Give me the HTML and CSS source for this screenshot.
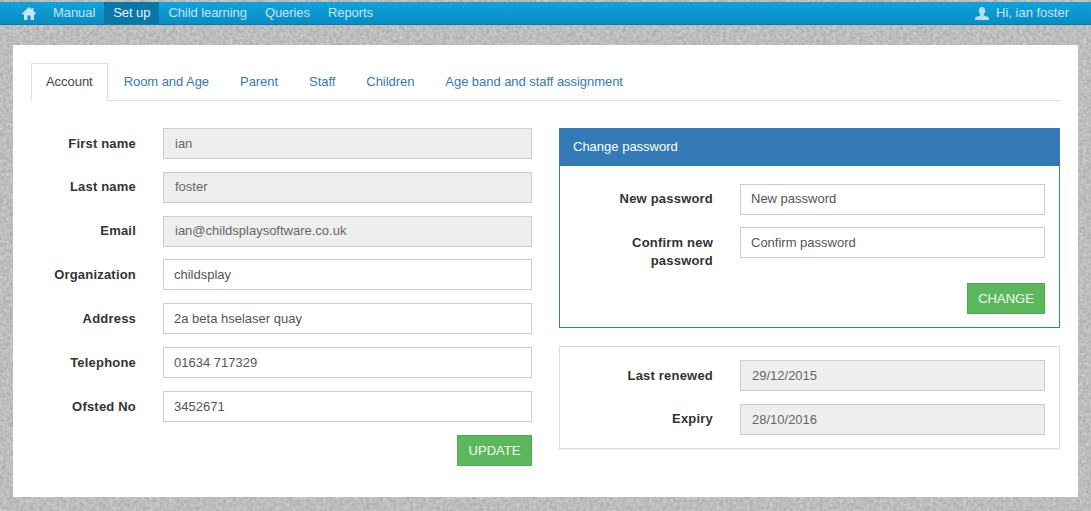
FILE: index.html
```html
<!DOCTYPE html>
<html lang="en">
<head>
<meta charset="utf-8">
<title>Account</title>
<link rel="stylesheet" href="styles.css">
</head>
<body>
<svg class="noise" aria-hidden="true"><filter id="grain" x="0" y="0" width="100%" height="100%" color-interpolation-filters="sRGB"><feTurbulence type="fractalNoise" baseFrequency="0.3" numOctaves="3" seed="4"/><feColorMatrix values="0 0 0 0.2 0.64  0 0 0 0.2 0.64  0 0 0 0.2 0.64  0 0 0 0 1"/></filter><rect width="100%" height="100%" filter="url(#grain)"/></svg>
<nav class="navbar">
  <a class="nav-home" href="#"><svg width="14" height="13" viewBox="0 0 14 13"><path fill="#c4e6f5" d="M7 0 L9.6 2.4 V1 H11.4 V4.1 L14 6.6 L13.2 7.4 H12 V13 H8.5 V8.6 H5.5 V13 H2 V7.4 H.8 L0 6.6 Z"/></svg></a>
  <a class="nav-link" href="#">Manual</a>
  <a class="nav-link active" href="#">Set up</a>
  <a class="nav-link" href="#">Child learning</a>
  <a class="nav-link" href="#">Queries</a>
  <a class="nav-link" href="#">Reports</a>
  <a class="nav-user" href="#"><svg width="14" height="13" viewBox="0 0 14 13"><path fill="#b4e0f3" d="M7 0 C9 0 10.2 1.5 10.2 3.6 C10.2 5.2 9.5 6.6 8.8 7.3 V8.4 L13.2 10 C13.8 10.3 14 11 14 13 H0 C0 11 .2 10.3 .8 10 L5.2 8.4 V7.3 C4.5 6.6 3.8 5.2 3.8 3.6 C3.8 1.5 5 0 7 0 Z"/></svg>Hi, ian foster</a>
</nav>
<main class="card">
  <ul class="tabs">
    <li class="tab current">Account</li>
    <li class="tab">Room and Age</li>
    <li class="tab">Parent</li>
    <li class="tab">Staff</li>
    <li class="tab">Children</li>
    <li class="tab">Age band and staff assignment</li>
  </ul>
  <div class="columns">
    <form class="account-form">
      <div class="field"><label>First name</label><div class="input locked">ian</div></div>
      <div class="field"><label>Last name</label><div class="input locked">foster</div></div>
      <div class="field"><label>Email</label><div class="input locked">ian@childsplaysoftware.co.uk</div></div>
      <div class="field"><label>Organization</label><div class="input">childsplay</div></div>
      <div class="field"><label>Address</label><div class="input">2a beta hselaser quay</div></div>
      <div class="field"><label>Telephone</label><div class="input">01634 717329</div></div>
      <div class="field"><label>Ofsted No</label><div class="input">3452671</div></div>
      <div class="actions"><button class="btn update" type="button">UPDATE</button></div>
    </form>
    <div class="side">
      <section class="panel primary">
        <h2 class="panel-heading">Change password</h2>
        <div class="panel-body">
          <div class="field wide"><label>New password</label><div class="input">New password</div></div>
          <div class="field wide"><label>Confirm new password</label><div class="input">Confirm password</div></div>
          <div class="actions"><button class="btn change" type="button">CHANGE</button></div>
        </div>
      </section>
      <section class="panel plain">
        <div class="field wide"><label>Last renewed</label><div class="input locked">29/12/2015</div></div>
        <div class="field wide"><label>Expiry</label><div class="input locked">28/10/2016</div></div>
      </section>
    </div>
  </div>
</main>
</body>
</html>
```
FILE: styles.css
```css
* { box-sizing: border-box; }
html, body { height: 100%; }
body {
  margin: 0;
  position: relative;
  height: 511px;
  overflow: hidden;
  background: #bdbdbd;
  font-family: "Liberation Sans", Arial, sans-serif;
  font-size: 13px;
  color: #333;
  padding-top: 2px;
}
.noise { position: absolute; inset: 0; width: 100%; height: 100%; z-index: 0; }
.navbar {
  position: relative;
  height: 23px;
  display: flex;
  align-items: stretch;
  padding-left: 22px;
  background: linear-gradient(#0fa3dc, #0a8cc4);
  border-bottom: 1px solid #0a7aab;
  color: #c4e6f5;
  line-height: 22px;
  letter-spacing: -.07px;
}
.navbar a { color: inherit; text-decoration: none; }
.nav-home { display: flex; align-items: center; width: 22px; }
.nav-link { padding: 0 9px; }
.nav-link.active { background: #0a77a6; color: #e9f6fb; }
.nav-user { margin-left: auto; padding-right: 22px; display: flex; align-items: center; gap: 7px; letter-spacing: 0; }
.card {
  position: relative;
  margin: 20px 13px 0;
  height: 452px;
  padding: 18px 18px 0;
  background: #fff;
}
.tabs {
  list-style: none;
  margin: 0;
  padding: 0;
  display: flex;
  height: 38px;
  border-bottom: 1px solid #ddd;
  color: #337ab7;
  letter-spacing: -.05px;
}
.tab { padding: 0 15px; line-height: 38px; height: 38px; margin-right: 1px; }
.tab.current {
  color: #444;
  line-height: 36px;
  background: #fff;
  border: 1px solid #ddd;
  border-bottom-color: #fff;
  padding: 0 14px;
}
.columns { display: flex; gap: 27px; margin-top: 27px; }
.account-form { width: 501px; }
.field { display: flex; align-items: flex-start; gap: 27px; margin-bottom: 12.83px; }
.field label {
  width: 105px;
  flex: none;
  padding-top: 6.6px;
  text-align: right;
  font-weight: bold;
  letter-spacing: .2px;
  line-height: 18px;
  color: #333;
}
.field.wide label { width: 153px; padding-left: 15px; }
.input {
  flex: 1;
  height: 31px;
  padding: .6px 11px 0 10px;
  border: 1px solid #ccc;
  line-height: 28px;
  color: #555;
  background: #fff;
}
.input.locked { padding-left: 11px; background: #eee; color: #666; }
.actions { display: flex; justify-content: flex-end; }
.btn {
  height: 31px;
  border: 1px solid #4cae4c;
  background: #5cb85c;
  color: #f4fbf4;
  font: inherit;
  padding: 0;
}
.update { width: 75px; }
.change { width: 78px; }
.side { width: 501px; }
.panel.primary { border: 1px solid #337ab7; height: 200px; }
.panel-heading {
  margin: 0;
  height: 37px;
  background: #337ab7;
  color: #fff;
  font-size: 13px;
  font-weight: normal;
  line-height: 35px;
  padding-left: 13px;
}
.panel-body { padding: 18px 14px 0 0; }
.panel-body .field { margin-bottom: 12.49px; }
.panel-body .field label { padding-top: 6.1px; }
.panel-body .input { padding-top: .4px; }
.panel-body .actions { margin-top: 13.4px; }
.panel.plain {
  margin-top: 18px;
  height: 103px;
  border: 1px solid #ddd;
  box-shadow: 0 1px 1px rgba(0, 0, 0, .05);
  padding: 13px 14px 0 0;
}
.panel.plain .input { padding-top: 0; line-height: 29px; }
```
